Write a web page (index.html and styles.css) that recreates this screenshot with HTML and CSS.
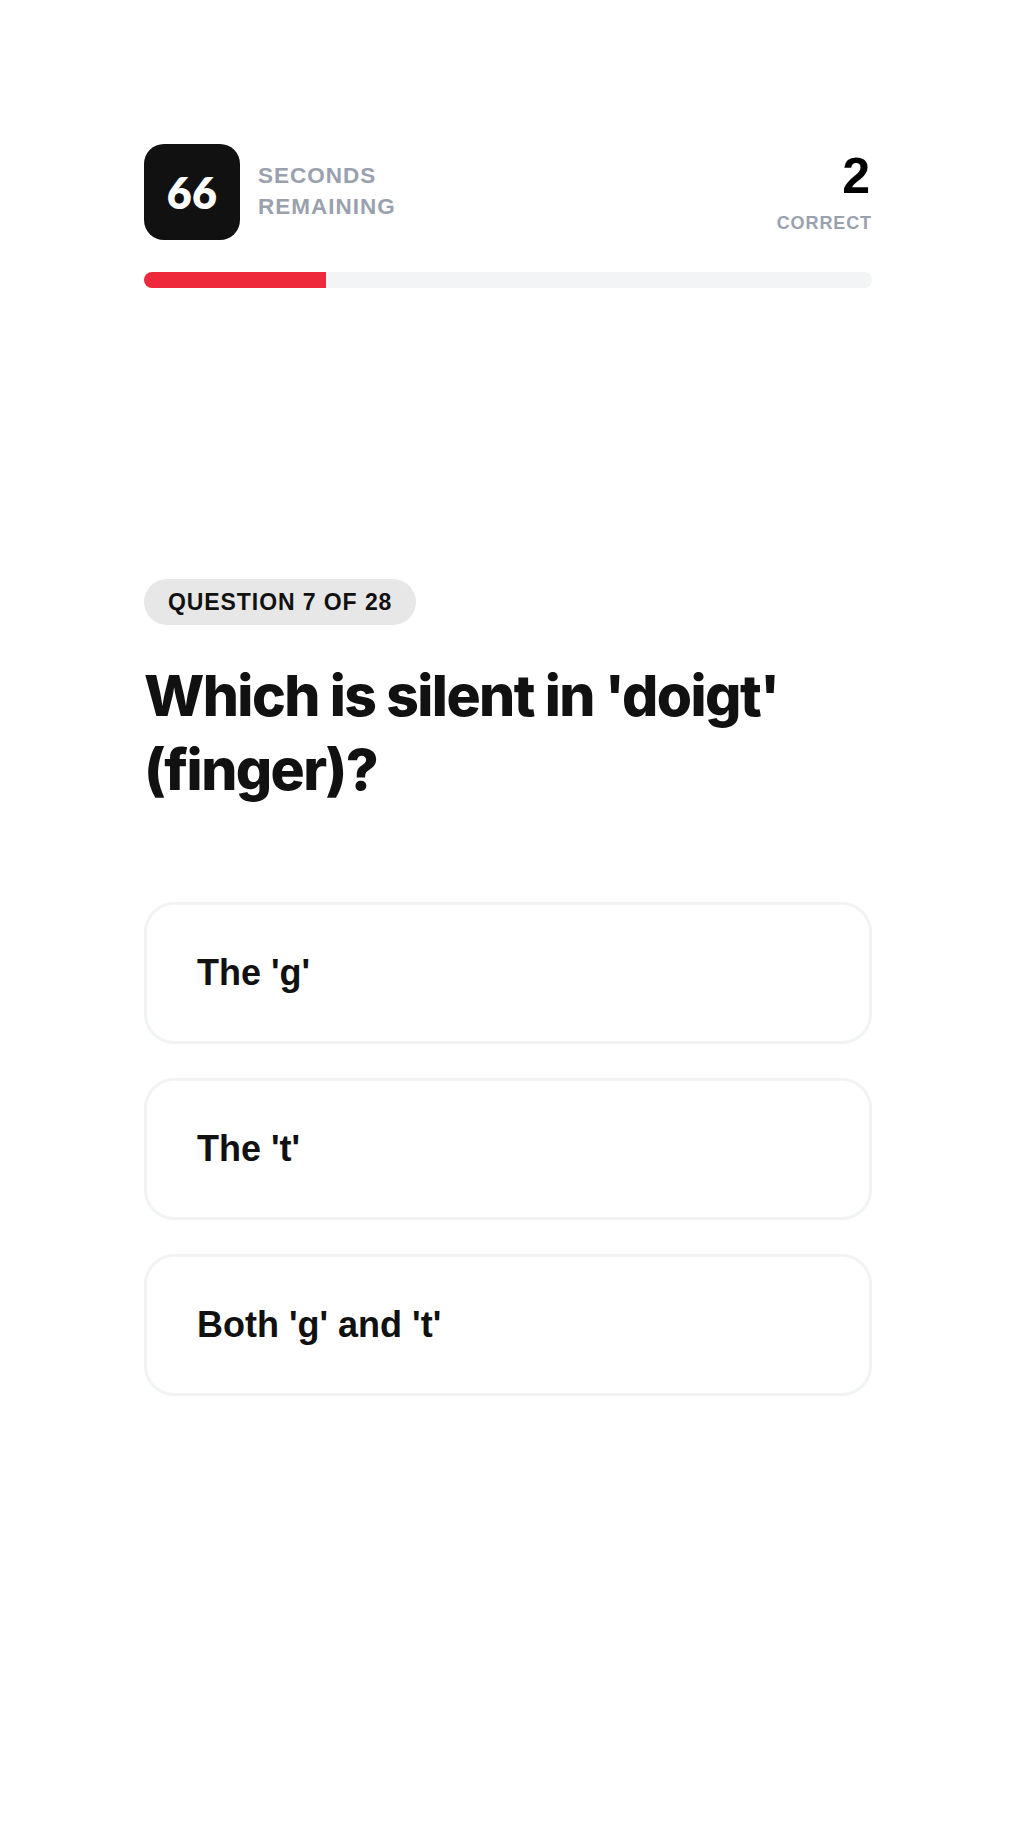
FILE: index.html
```html
<!DOCTYPE html>
<html lang="en">
<head>
<meta charset="utf-8">
<title>Quiz</title>
<link rel="stylesheet" href="styles.css">
</head>
<body>
<div class="page">
  <header class="top">
    <div class="timer">
      <div class="timer-box">66</div>
      <div class="timer-label">SECONDS<br>REMAINING</div>
    </div>
    <div class="score">
      <div class="score-num">2</div>
      <div class="score-label">CORRECT</div>
    </div>
  </header>
  <div class="bar"><div class="bar-fill" style="width:25%"></div></div>

  <main class="quiz">
    <div class="badge">QUESTION 7 OF 28</div>
    <h1 class="question">Which is silent in 'doigt' (finger)?</h1>
    <div class="options">
      <button class="option">The 'g'</button>
      <button class="option">The 't'</button>
      <button class="option">Both 'g' and 't'</button>
    </div>
  </main>
</div>
</body>
</html>
```
FILE: styles.css
```css
* { box-sizing: border-box; }
html, body { margin: 0; padding: 0; background: #fff; }
body {
  font-family: "Liberation Sans", Arial, sans-serif;
  color: #111111;
  width: 1020px;
  min-height: 1844px;
}
.page {
  width: 728px;
  margin-left: 144px;
  padding-top: 144px;
}
.top {
  display: flex;
  align-items: center;
  justify-content: space-between;
  height: 96px;
}
.timer {
  display: flex;
  align-items: center;
  gap: 18px;
}
.timer-box {
  width: 96px;
  height: 96px;
  border-radius: 20px;
  background: #111111;
  color: #ffffff;
  display: flex;
  align-items: center;
  justify-content: center;
  font-family: "Lato", sans-serif;
  font-weight: 800;
  font-size: 43px;
  letter-spacing: 0.01em;
}
.timer-label {
  font-weight: 700;
  font-size: 22.5px;
  line-height: 31px;
  letter-spacing: 0.045em;
  color: #9aa1ae;
  margin-top: -2px;
}
.score {
  display: flex;
  flex-direction: column;
  align-items: flex-end;
}
.score-num {
  font-weight: 700;
  font-size: 50px;
  line-height: 50px;
  color: #000;
  margin-right: 2px;
}
.score-label {
  margin-top: 11px;
  font-weight: 700;
  font-size: 18px;
  line-height: 22px;
  letter-spacing: 0.05em;
  color: #9aa1ae;
}
.bar {
  margin-top: 32px;
  height: 16px;
  border-radius: 8px;
  background: #f3f4f6;
  overflow: hidden;
}
.bar-fill {
  height: 100%;
  background: #ee293b;
}
.quiz {
  padding-top: 291px;
}
.badge {
  display: inline-block;
  height: 46px;
  line-height: 46px;
  padding: 0 24px;
  border-radius: 23px;
  background: #e7e7e7;
  font-weight: 700;
  font-size: 23px;
  letter-spacing: 0.04em;
  color: #111;
}
.question {
  margin: 34px 0 0;
  font-family: "Inter", sans-serif;
  font-weight: 800;
  font-size: 57px;
  line-height: 74px;
  letter-spacing: -0.028em;
  color: #111;
}
.options {
  margin-top: 95px;
  display: flex;
  flex-direction: column;
  gap: 34px;
}
.option {
  display: block;
  width: 100%;
  height: 142px;
  border: 3px solid #f2f3f5;
  border-radius: 30px;
  background: #fff;
  text-align: left;
  padding: 0 0 0 50px;
  font-family: "Liberation Sans", Arial, sans-serif;
  font-weight: 700;
  font-size: 36px;
  color: #111;
  cursor: pointer;
}
```
